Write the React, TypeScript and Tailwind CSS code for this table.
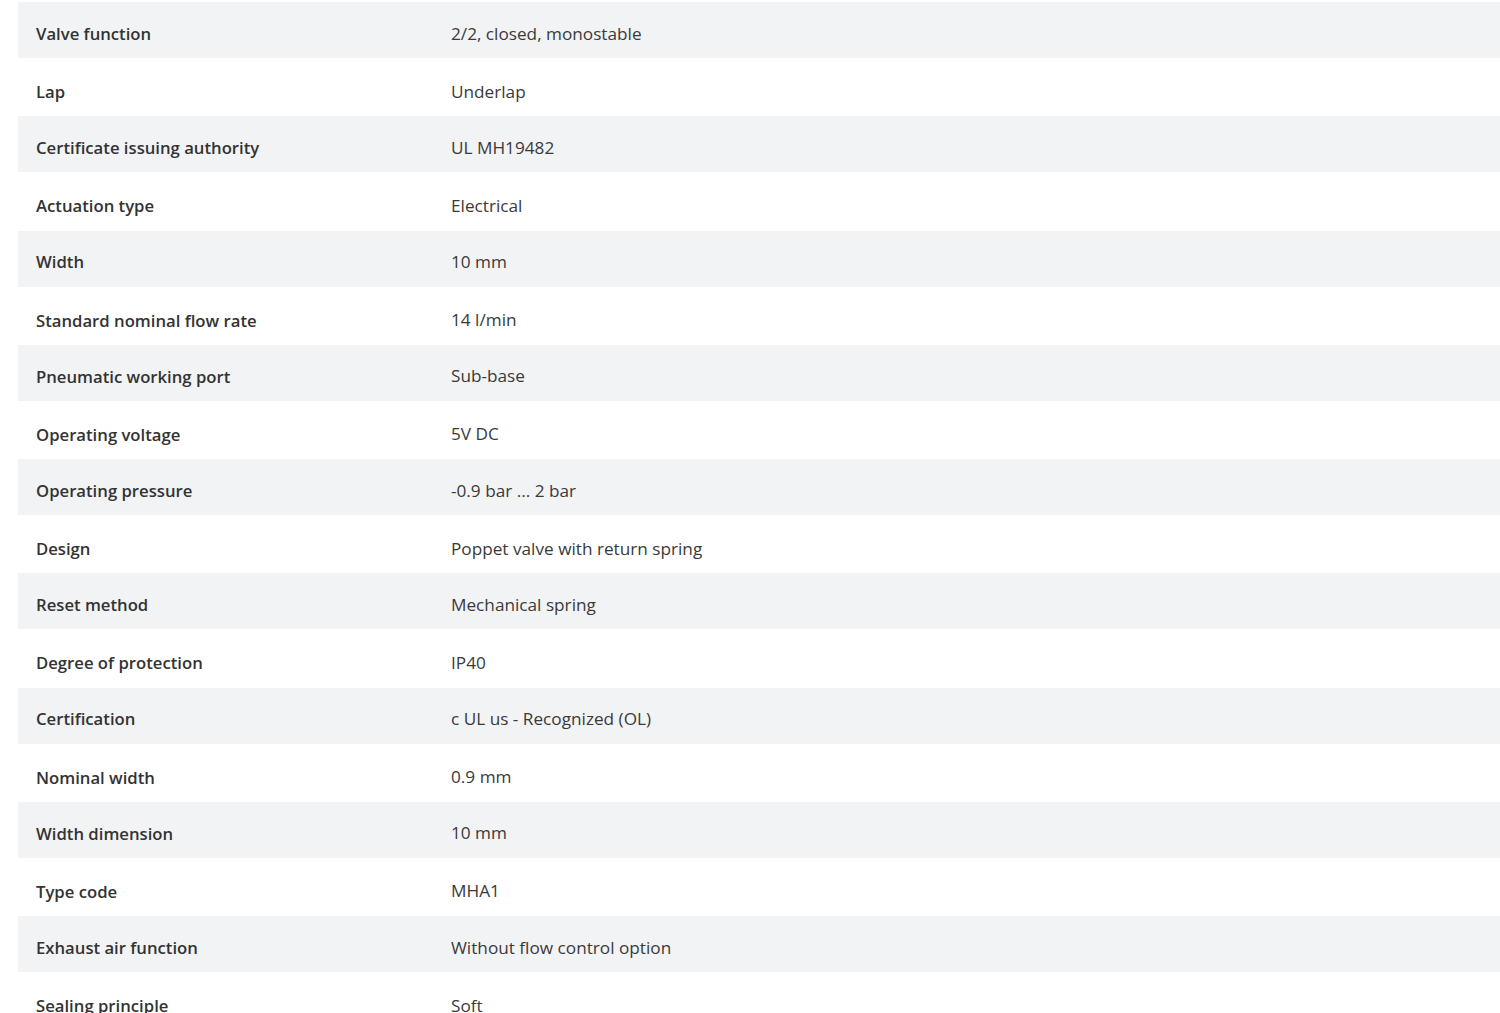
import React from "react";

const rows: [string, string][] = [
  ["Valve function", "2/2, closed, monostable"],
  ["Lap", "Underlap"],
  ["Certificate issuing authority", "UL MH19482"],
  ["Actuation type", "Electrical"],
  ["Width", "10 mm"],
  ["Standard nominal flow rate", "14 l/min"],
  ["Pneumatic working port", "Sub-base"],
  ["Operating voltage", "5V DC"],
  ["Operating pressure", "-0.9 bar ... 2 bar"],
  ["Design", "Poppet valve with return spring"],
  ["Reset method", "Mechanical spring"],
  ["Degree of protection", "IP40"],
  ["Certification", "c UL us - Recognized (OL)"],
  ["Nominal width", "0.9 mm"],
  ["Width dimension", "10 mm"],
  ["Type code", "MHA1"],
  ["Exhaust air function", "Without flow control option"],
  ["Sealing principle", "Soft"],
];

export default function App() {
  return (
    <div className="w-[1500px] h-[1013px] overflow-hidden bg-white pt-[2px] pl-[18px] font-['Open_Sans',sans-serif]">
      {rows.map(([k, v], i) => (
        <div
          key={k}
          className={
            i % 2 === 0
              ? "flex items-center h-[56px] bg-[#f2f3f5] pt-[7px]"
              : "flex items-center h-[58.25px] bg-white pt-[9px]"
          }
        >
          <div className="w-[433px] pl-[18px] text-[16.7px] font-semibold text-[#333333]">{k}</div>
          <div className="text-[17.2px] text-[#3a3a3a]">{v}</div>
        </div>
      ))}
    </div>
  );
}
